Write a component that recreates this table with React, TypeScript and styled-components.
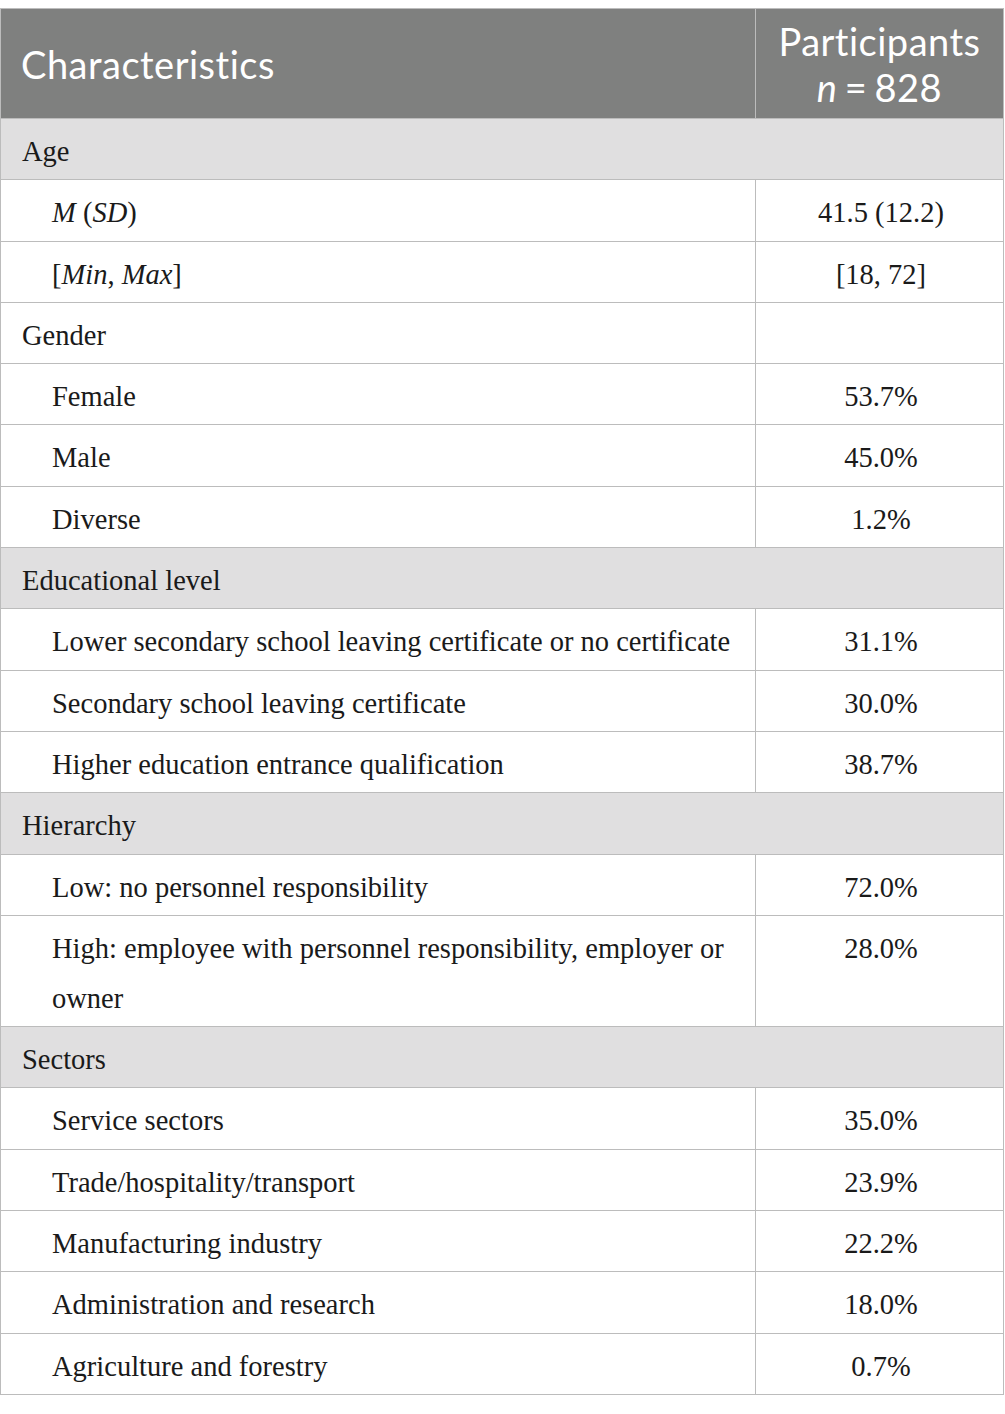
import React from "react";
import styled, { createGlobalStyle } from "styled-components";

const Global = createGlobalStyle`
  html, body { margin: 0; padding: 0; background: #ffffff; }
  body { width: 1005px; }
`;

const Page = styled.div`
  padding-top: 8px;
  width: 1005px;
`;

const Table = styled.table`
  width: 1004px;
  border-collapse: collapse;
  table-layout: fixed;
  border: 1.5px solid #bcbcbc;
`;

const HeadCell = styled.th<{ $center?: boolean }>`
  background: #7f807f;
  color: #ffffff;
  font-family: Lato, "Open Sans", sans-serif;
  font-weight: 400;
  font-size: 38px;
  line-height: 46px;
  letter-spacing: 0.5px;
  padding: 9px 20px 8px 20px;
  text-align: ${(p) => (p.$center ? "center" : "left")};
  border: 1.5px solid #bcbcbc;
  vertical-align: middle;
`;

const HeadLine = styled.span`
  display: block;
`;

const CountLine = styled.span`
  display: block;
  word-spacing: -3px;
`;

const Row = styled.tr<{ $section?: boolean }>`
  background: ${(p) => (p.$section ? "#e0dfe0" : "#ffffff")};
`;

const Cell = styled.td<{ $indent?: boolean; $center?: boolean }>`
  font-family: "Liberation Serif", "Times New Roman", serif;
  font-size: 28.5px;
  line-height: 50px;
  color: #1a1a1a;
  padding: 8px 18px 2.3px ${(p) => (p.$indent ? "51px" : "21px")};
  text-align: ${(p) => (p.$center ? "center" : "left")};
  vertical-align: top;
  border: 1.5px solid #bcbcbc;
`;

const I = styled.i`
  font-style: italic;
`;

type Item = { label: React.ReactNode; value?: string };
type Section = { title: string; items: Item[] };

const sections: Section[] = [
  {
    title: "Age",
    items: [
      { label: <><I>M</I> (<I>SD</I>)</>, value: "41.5 (12.2)" },
      { label: <>[<I>Min</I>, <I>Max</I>]</>, value: "[18, 72]" },
    ],
  },
  {
    title: "Gender",
    items: [
      { label: "Female", value: "53.7%" },
      { label: "Male", value: "45.0%" },
      { label: "Diverse", value: "1.2%" },
    ],
  },
  {
    title: "Educational level",
    items: [
      { label: "Lower secondary school leaving certificate or no certificate", value: "31.1%" },
      { label: "Secondary school leaving certificate", value: "30.0%" },
      { label: "Higher education entrance qualification", value: "38.7%" },
    ],
  },
  {
    title: "Hierarchy",
    items: [
      { label: "Low: no personnel responsibility", value: "72.0%" },
      { label: "High: employee with personnel responsibility, employer or owner", value: "28.0%" },
    ],
  },
  {
    title: "Sectors",
    items: [
      { label: "Service sectors", value: "35.0%" },
      { label: "Trade/hospitality/transport", value: "23.9%" },
      { label: "Manufacturing industry", value: "22.2%" },
      { label: "Administration and research", value: "18.0%" },
      { label: "Agriculture and forestry", value: "0.7%" },
    ],
  },
];

export default function App() {
  return (
    <Page>
      <Global />
      <Table>
        <colgroup>
          <col style={{ width: "755px" }} />
          <col />
        </colgroup>
        <thead>
          <tr>
            <HeadCell>Characteristics</HeadCell>
            <HeadCell $center>
              <HeadLine>Participants</HeadLine>
              <CountLine>
                <I>n</I> = 828
              </CountLine>
            </HeadCell>
          </tr>
        </thead>
        <tbody>
          {sections.map((s) => (
            <React.Fragment key={s.title}>
              {s.title === "Gender" ? (
                <Row>
                  <Cell>{s.title}</Cell>
                  <Cell />
                </Row>
              ) : (
                <Row $section>
                  <Cell colSpan={2}>{s.title}</Cell>
                </Row>
              )}
              {s.items.map((it, i) => (
                <Row key={i}>
                  <Cell $indent>{it.label}</Cell>
                  <Cell $center>{it.value}</Cell>
                </Row>
              ))}
            </React.Fragment>
          ))}
        </tbody>
      </Table>
    </Page>
  );
}
